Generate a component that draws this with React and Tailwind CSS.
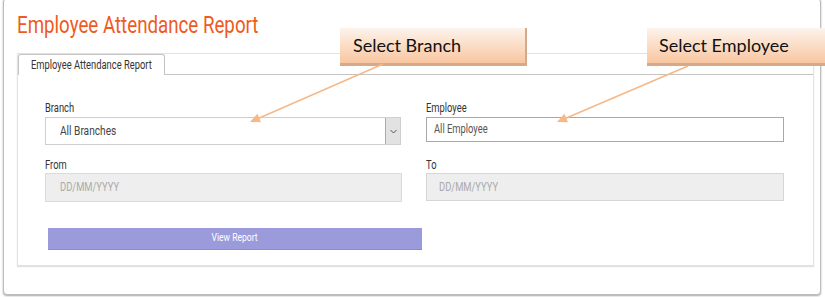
const narrow = "inline-block scale-x-[0.78] origin-left whitespace-nowrap";

function Label({ children }) {
  return (
    <div className="h-[16px] text-[12px] leading-[16px] text-[#333]">
      <span className={narrow}>{children}</span>
    </div>
  );
}

function Callout({ text, className }) {
  return (
    <div
      className={
        "absolute top-[28px] h-[38px] bg-linear-to-b from-[#fdf3ec] to-[#f8c6a0] border-b-[3px] border-r-2 border-[#d6a98b] flex items-center font-['Lato',sans-serif] text-[18px] text-[#111] " +
        className
      }
    >
      {text}
    </div>
  );
}

function Arrows() {
  return (
    <svg className="absolute inset-0 pointer-events-none" width="825" height="297">
      <line x1="383" y1="64" x2="257" y2="119" stroke="#f7b887" strokeWidth="1.6" />
      <polygon points="250,122 261,122.3 257.4,113.8" fill="#f7b887" />
      <line x1="688" y1="66" x2="564" y2="119" stroke="#f7b887" strokeWidth="1.6" />
      <polygon points="557,122 568,122.3 564.4,113.8" fill="#f7b887" />
    </svg>
  );
}

export default function App() {
  return (
    <div className="relative w-[825px] h-[297px] overflow-hidden bg-white font-['Roboto',sans-serif]">
      <div className="ml-[3px] mt-[-2px] w-[818px] h-[297px] rounded-[4px] border border-[#bdbdbd] shadow-[0_1px_2px_rgba(0,0,0,0.35)] bg-white pl-[13px]">
        <div className="h-[39px] pt-[13px] text-[24px] leading-[26px] text-[#f05a1e]">
          <span className={narrow}>Employee Attendance Report</span>
        </div>
        <div className="mt-[15px] w-[797px] h-[213px] border border-[#e2e2e2] shadow-[0_1px_1px_rgba(0,0,0,0.12)]">
          <div className="flex h-[21px]">
            <div className="w-[147px] h-[21px] mt-[0px] border border-b-0 border-[#c4c4c4] rounded-t-[3px] pl-[12px] text-[12px] leading-[20px] text-[#333] bg-white">
              <span className={narrow}>Employee Attendance Report</span>
            </div>
            <div className="flex-1 border-b border-[#c4c4c4]" />
          </div>
          <div className="pl-[27px] pt-[25px]">
            <div className="grid grid-cols-[356px_358px] gap-x-[25px]">
              <div>
                <Label>Branch</Label>
                <div className="flex w-[356px] h-[28px] mt-[1px] border border-[#cfcfcf]">
                  <div className="flex-1 pl-[14px] text-[13px] leading-[26px] text-[#444]">
                    <span className={narrow}>All Branches</span>
                  </div>
                  <div className="w-[15px] h-[26px] bg-[#e2e2e2] border-l border-[#aaa] flex items-center justify-center">
                    <svg width="7" height="5" viewBox="0 0 7 5">
                      <path d="M0.5 1 L3.5 4 L6.5 1" fill="none" stroke="#555" strokeWidth="1" />
                    </svg>
                  </div>
                </div>
              </div>
              <div>
                <Label>Employee</Label>
                <div className="w-[358px] h-[25px] mt-[1px] border border-[#a9a9a9] pl-[7px] text-[12px] leading-[22px] text-[#555]">
                  <span className={narrow}>All Employee</span>
                </div>
              </div>
              <div className="mt-[12px]">
                <Label>From</Label>
                <div className="w-[357px] h-[29px] border border-[#dadada] bg-[#eeeeee] pl-[14px] text-[12px] leading-[27px] text-[#aaa]">
                  <span className={narrow}>DD/MM/YYYY</span>
                </div>
              </div>
              <div className="mt-[12px]">
                <Label>To</Label>
                <div className="w-[358px] h-[28px] border border-[#d6d6d6] bg-[#eeeeee] pl-[12px] text-[12px] leading-[26px] text-[#aaa]">
                  <span className={narrow}>DD/MM/YYYY</span>
                </div>
              </div>
            </div>
            <div className="ml-[3px] mt-[26px] w-[374px] h-[22px] bg-[#9b9bdb] border-b border-[#8a8ad0] flex items-center justify-center text-[11px] text-white">
              <span className="inline-block scale-x-[0.78] whitespace-nowrap">View Report</span>
            </div>
          </div>
        </div>
      </div>
      <Callout text="Select Branch" className="left-[340px] w-[187px] pl-[13px]" />
      <Callout text="Select Employee" className="left-[647px] w-[182px] pl-[12px]" />
      <Arrows />
    </div>
  );
}
